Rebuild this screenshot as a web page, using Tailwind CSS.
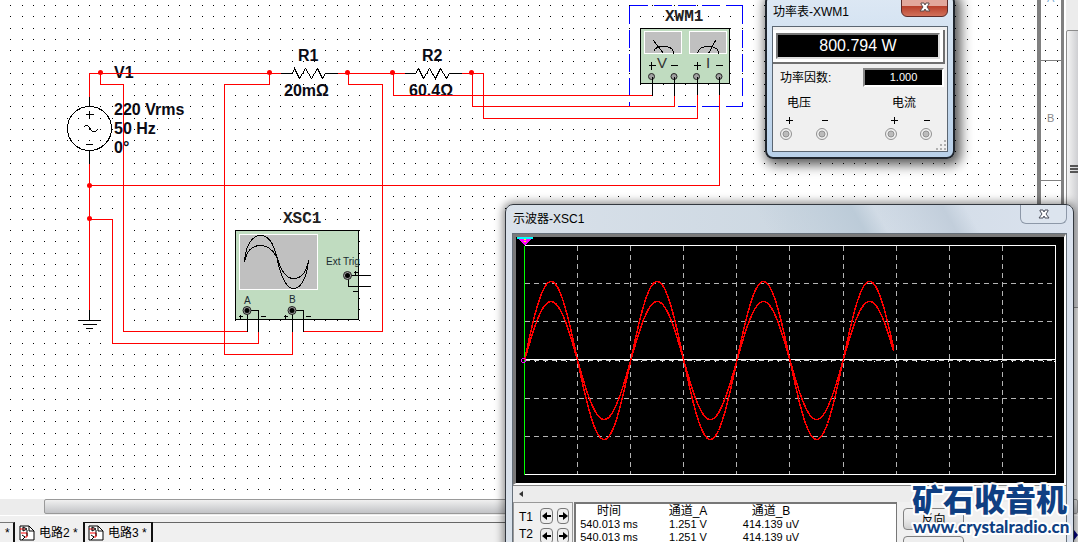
<!DOCTYPE html>
<html lang="zh-CN">
<head>
<meta charset="utf-8">
<meta name="viewport" content="width=device-width, initial-scale=1">
<title>电路2</title>
<script src="https://cdn.jsdelivr.net/npm/@tailwindcss/browser@4"></script>
</head>
<body class="relative flex h-screen flex-col overflow-hidden bg-[#f0f0f0] font-['Liberation_Sans','Noto_Sans_CJK_SC',sans-serif] text-xs text-black">

<!-- Editor: schematic sheet and vertical scrollbar -->
<div class="flex min-h-0 flex-1">
  <main class="relative min-w-0 flex-1 overflow-hidden bg-white">
    <svg class="absolute inset-0 h-full w-full" role="img" aria-label="电路图">
      <defs>
        <pattern id="dots" width="45" height="45" patternUnits="userSpaceOnUse">
          <path shape-rendering="crispEdges" d="M10 5h1v1h-1zM22 5h1v1h-1zM33 5h1v1h-1zM44 5h1v1h-1zM10 16h1v1h-1zM22 16h1v1h-1zM33 16h1v1h-1zM44 16h1v1h-1zM10 28h1v1h-1zM22 28h1v1h-1zM33 28h1v1h-1zM44 28h1v1h-1zM10 39h1v1h-1zM22 39h1v1h-1zM33 39h1v1h-1zM44 39h1v1h-1z"/>
        </pattern>
      </defs>
      <rect width="100%" height="100%" fill="url(#dots)"/>
      <!-- sheet border -->
      <g shape-rendering="crispEdges" fill="#808080">
        <rect x="1037" width="4" height="100%"/><rect x="1061" width="3" height="100%"/>
        <rect x="1041" y="60" width="20" height="1"/><rect x="1041" y="180" width="20" height="1"/>
      </g>
      <g font-size="11" fill="#888"><text x="1047" y="2" fill="#7fb0d8">A</text><text x="1047" y="122">B</text></g>

      <!-- labels -->
      <g font-size="16" font-weight="700" fill="#0a0a14">
        <text x="114" y="78">V1</text>
        <text x="114" y="115">220 Vrms</text><text x="114" y="134">50 Hz</text><text x="114" y="153">0°</text>
        <text x="298" y="61">R1</text><text x="284" y="96">20mΩ</text>
        <text x="422" y="61">R2</text><text x="409" y="96">60.4Ω</text>
      </g>
      <g font-family="Liberation Mono, monospace" font-size="16" font-weight="700" fill="#222">
        <text x="283" y="223">XSC1</text><text x="665" y="21">XWM1</text>
      </g>

      <!-- instrument bodies -->
      <g transform="translate(.5 .5)" shape-rendering="crispEdges">
        <rect x="235" y="230" width="123" height="89" fill="#c0dcc0" stroke="#000"/>
        <rect x="239" y="234" width="78" height="55" fill="#c0c0c0" stroke="#fff"/>
        <rect x="640" y="28" width="89" height="55" fill="#c0dcc0" stroke="#000"/>
        <rect x="644" y="31" width="37" height="22" fill="#c0c0c0" stroke="#fff"/>
        <rect x="689" y="31" width="37" height="22" fill="#c0c0c0" stroke="#fff"/>
        <path d="M629 5H742M629 106H742" fill="none" stroke="#00f" stroke-dasharray="18 6"/>
        <path d="M629 5V106M742 5V106" fill="none" stroke="#00f" stroke-dasharray="18 6"/>
      </g>

      <!-- wires -->
      <g transform="translate(.5 .5)" shape-rendering="crispEdges" fill="none" stroke="#f00">
        <path d="M89 96V73H280M337 73H404M461 73H483V118H697V94"/>
        <path d="M100 73V84H123V331H247M269 73V84H224V354H292V331M348 73V84H382V331H303"/>
        <path d="M393 73V95H652M472 73V106H674V95M719 94V185H89"/>
        <path d="M89 163V309M89 219H112V343H258V331"/>
        <g stroke="#000">
          <path d="M89 96V106M89 151V163M89 309V320M78 320H100M82 324H96M85 328H92"/>
          <path d="M280 73H292M325 73H337M404 73H415M449 73H461"/>
          <path d="M247 311V331M249 310H258V330M292 311V331M294 310H303V330M350 275H370M348 277V286H370"/>
          <path d="M652 77V95M674 77V95M697 77V94M719 77V94"/>
          <path d="M85 114H93M89 110V118M85 144H92"/>
          <path d="M238 316H242M240 314V318M260 316H265M283 316H287M285 314V318M305 316H310M353 272H357M355 270V274M352 291H357"/>
          <path d="M648 65H655M651 61V69M670 65H677M693 65H700M697 61V69M715 65H722"/>
          <circle cx="89" cy="128" r="22"/>
          <path d="M83 127L85 125H87L92 131H95L97 129"/>
          <path d="M292 73L294 68 299 78 305 68 311 78 317 68 322 78 325 73M415 73L418 68 423 78 429 68 435 78 440 68 446 78 449 73"/>
          <path d="M244 262C245 244 252 235 260 235C268 235 274 244 277 260C281 278 286 288 293 288C300 288 306 279 308 260"/>
          <path d="M244 262C246 250 252 245 260 245C268 245 273 250 277 258C281 272 287 278 293 278C301 278 306 272 308 260"/>
          <path d="M653 40L663 53M653 51C656 44 670 44 673 51V53M715 40L708 53M697 53C698 44 715 44 718 51V53"/>
        </g>
      </g>
      <g fill="#f00">
        <circle cx="100.5" cy="72.5" r="2.5"/><circle cx="269.5" cy="72.5" r="2.5"/><circle cx="347.5" cy="72.5" r="2.5"/><circle cx="392.5" cy="72.5" r="2.5"/><circle cx="471.5" cy="72.5" r="2.5"/><circle cx="89.5" cy="185.5" r="2.5"/><circle cx="89.5" cy="218.5" r="2.5"/>
      </g>
      <!-- terminals -->
      <g fill="#a0a0a0" stroke="#222">
        <circle cx="651.5" cy="76.5" r="3"/><circle cx="674" cy="76.5" r="3"/><circle cx="696.5" cy="76.5" r="3"/><circle cx="719" cy="76.5" r="3"/>
        <circle cx="247" cy="310.5" r="4"/><circle cx="292" cy="310.5" r="4"/><circle cx="347.5" cy="275.5" r="4"/>
      </g>
      <g><circle cx="247" cy="310.5" r="2.5"/><circle cx="292" cy="310.5" r="2.5"/><circle cx="347.5" cy="275.5" r="2.5"/></g>
      <path d="M652.5 77v5M674.5 77v5M697.5 77v5M719.5 77v5" stroke="#000"/>
      <g font-size="10" fill="#1b2a30"><text x="326" y="265">Ext Trig</text><text x="244" y="304">A</text><text x="289" y="303">B</text></g>
      <g font-size="15" fill="#333"><text x="657" y="68">V</text><text x="706" y="68">I</text></g>
    </svg>
  </main>
  <div class="w-[13px] border-l border-white bg-[#ececec] pt-[30px]">
    <div class="-mr-1 flex h-[278px] items-center rounded-xs border border-[#8c8c8c] bg-linear-to-r from-[#f4f4f4] to-[#c4c5c9] pl-[3px]">
      <svg width="8" height="9" shape-rendering="crispEdges"><path d="M0 1h8M0 4h8M0 7h8" stroke="#555" stroke-width="2"/></svg>
    </div>
  </div>
</div>

<!-- Horizontal scrollbar -->
<div class="h-[17px] border-b border-white bg-[#ececec] pl-[44px]">
  <div class="h-[15px] rounded-xs border border-[#999] bg-linear-to-b from-[#f0f0f0] to-[#c2c3c6]"></div>
</div>

<!-- Sheet tabs -->
<nav class="flex h-[26px] pt-[6px] text-xs" aria-label="图纸">
  <a href="#s1" class="w-[15px] border-t border-r-2 border-[#111] border-t-[#777] pl-[5px] leading-[20px]">*</a>
  <a href="#s2" class="flex w-[68px] items-center gap-1 pt-[2px] pl-[4px] whitespace-nowrap">
    <svg width="16" height="16" fill="none" stroke="#000" class="shrink-0"><path d="M1 1h9l5 5v9H1z" fill="#fff"/><path d="M10 1v5h5"/><path d="M1 4h5M2 8h6v4H5" stroke="#f00"/><path d="M4 2v4l4-2zM3 10l3 2-3 3M8 5v6"/></svg>
    <span>电路2 *</span></a>
  <a href="#s3" class="flex w-[70px] items-center gap-1 border-x-2 border-t border-[#111] pl-[3px] whitespace-nowrap">
    <svg width="16" height="16" fill="none" stroke="#000" class="shrink-0"><path d="M1 1h9l5 5v9H1z" fill="#fff"/><path d="M10 1v5h5"/><path d="M1 4h5M2 8h6v4H5" stroke="#f00"/><path d="M4 2v4l4-2zM3 10l3 2-3 3M8 5v6"/></svg>
    <span>电路3 *</span></a>
  <span class="flex-1 border-t border-[#666]"></span>
  <svg class="mt-2 shrink-0" width="4" height="10"><path d="M0 0v10l4-5z" fill="#000080"/></svg>
</nav>

<!-- Wattmeter window -->
<section class="absolute -top-[6px] left-[765px] w-[190px] rounded-lg border-2 border-[#20262e] bg-linear-to-b from-[#dde8f4] via-[#c9dcef] to-[#b9d1ea] px-[5px] pb-[5px] shadow-[3px_3px_12px_3px_rgba(0,0,0,0.65)]" aria-label="功率表-XWM1">
  <header class="flex h-[30px] items-start justify-between pl-px">
    <h2 class="pt-[7px] leading-[18px]">功率表-XWM1</h2>
    <button aria-label="关闭" class="flex h-[21px] w-[47px] items-center justify-center rounded-b-md border border-[#5b2a28] bg-linear-to-b from-[#e2a79c] from-45% via-[#b8402c] via-50% to-[#d0705a] pt-[2px]">
      <svg width="12" height="11"><path d="M2 1h3l1 2 1-2h3v1L8 5l3 4H7L6 7 5 9H1l3-4-2-3z" fill="#fff" stroke="#5a4a4a"/></svg>
    </button>
  </header>
  <div class="border border-[#5b6672] bg-[#f0f0f0] pt-[3px] pb-[6px]">
    <div class="mr-[2px] border-r-2 border-b-2 border-[#707070] bg-white p-[3px]">
      <output class="block h-[26px] border-2 border-[#777] border-r-[#ddd] border-b-[#ddd] bg-black text-center text-base leading-[22px] text-white">800.794 W</output>
    </div>
    <div class="mt-[4px] flex items-center justify-between pr-[3px] pl-[7px]">
      <span>功率因数:</span>
      <output class="h-[19px] w-[81px] border-2 border-[#888] border-r-white border-b-white bg-black text-center text-[11px] leading-[15px] text-white">1.000</output>
    </div>
    <div class="mt-[8px] flex justify-between pr-[14px] pl-[7px]">
      <div><p class="pl-[7px] leading-[16px]">电压</p>
        <svg width="50" height="34" fill="none" stroke="#000"><path d="M6 9.500h7M9.500 6v7M42 9.500h6" shape-rendering="crispEdges"/><g stroke="#909090"><circle cx="6" cy="23" r="5.500"/><circle cx="42" cy="23" r="5.500"/><circle cx="6" cy="23" r="3" fill="#bbb"/><circle cx="42" cy="23" r="3" fill="#bbb"/></g></svg></div>
      <div><p class="pl-[7px] leading-[16px]">电流</p>
        <svg width="48" height="34" fill="none" stroke="#000"><path d="M6 9.500h7M9.500 6v7M39 9.500h6" shape-rendering="crispEdges"/><g stroke="#909090"><circle cx="6" cy="23" r="5.500"/><circle cx="41" cy="23" r="5.500"/><circle cx="6" cy="23" r="3" fill="#bbb"/><circle cx="41" cy="23" r="3" fill="#bbb"/></g></svg></div>
    </div>
  </div>
  <svg class="absolute right-[7px] bottom-[7px]" width="10" height="10" fill="#b0b0b0"><path d="M8 0h2v2H8zM4 4h2v2H4zM8 4h2v2H8zM0 8h2v2H0zM4 8h2v2H4zM8 8h2v2H8z"/></svg>
</section>

<!-- Oscilloscope window -->
<section class="absolute top-[204px] left-[505px] flex h-[350px] w-[569px] flex-col rounded-t-lg border border-[#33383f] bg-linear-to-r from-[#d9e1ea] via-[#cdd8e2] to-[#dae2ee] px-[6px] shadow-[0_0_8px_2px_rgba(0,0,0,0.45)]" aria-label="示波器-XSC1">
  <header class="flex h-[28px] shrink-0 items-start justify-between bg-[linear-gradient(60deg,transparent_45%,#bccbd8_62%,transparent_66%,#c2cedb_78%,transparent_82%)] pl-px">
    <h2 class="pt-[5px] leading-[18px]">示波器-XSC1</h2>
    <button aria-label="关闭" class="flex h-[19px] w-[47px] items-center justify-center rounded-b-md border border-t-0 border-[#8d98a8] bg-[#dce4ee]">
      <svg width="12" height="11"><path d="M2 1h3l1 2 1-2h3v1L8 5l3 4H7L6 7 5 9H1l3-4-2-3z" fill="#fff" stroke="#4a4f5c"/></svg>
    </button>
  </header>
  <div class="min-h-0 flex-1 border border-[#66707a] bg-[#f0f0f0]">
    <div class="border-t-3 border-r-2 border-b-2 border-l-3 border-[#7a7a7a] border-r-white border-b-white bg-black">
      <svg id="plot" class="block w-full" height="246" viewBox="516 237 548 246" fill="none" shape-rendering="crispEdges" role="img" aria-label="波形">
        <g transform="translate(.5 .5)">
          <path d="M577 245V474M630 245V474M683 245V474M736 245V474M789 245V474M843 245V474M896 245V474M949 245V474M1002 245V474" stroke="#b4b4b4" stroke-dasharray="5 4"/>
          <path d="M524 283H1055M524 321H1055M524 398H1055M524 436H1055" stroke="#b4b4b4" stroke-dasharray="5 4"/>
          <path d="M524 245H1055V474H524M524 359H1055" stroke="#fff"/>
          <path d="M524 360H1055" stroke="#ccc" stroke-dasharray="5 4"/>
          <path d="M534 361H1055" stroke="#fff" stroke-dasharray="1 9.600"/>
          <path d="M524 245V474" stroke="#0f0"/>
          <path id="waveA" stroke="#f00" stroke-width="1.500"/><path id="waveB" stroke="#f00" stroke-width="1.500"/>
          <path d="M516 237h16l-8 8z" fill="#f0f"/><path d="M516 237h16" stroke="#0ff" stroke-width="2"/><path d="M523 239h2M523 241h2" stroke="#ff0"/>
          <circle cx="523" cy="360" r="2" stroke="#f0f"/>
        </g>
      </svg>
    </div>
    <div class="flex h-[17px] items-center border-t border-[#888] bg-[#ececec] pl-[6px]">
      <svg width="4" height="6"><path d="M4 0v6L0 3z" fill="#333"/></svg>
    </div>
    <div class="flex items-start gap-px">
      <div class="grid w-[60px] grid-cols-[18px_13px_13px] gap-x-[3px] gap-y-[2px] border border-[#999] px-[5px] pt-[5px] pb-4">
        <span class="leading-[18px]">T1</span>
        <button aria-label="T1 左移" class="flex h-4 items-center justify-center rounded-sm border border-[#777] bg-[#eee]"><svg width="9" height="8"><path d="M0 4l5-4v3h4v2H5v3z"/></svg></button>
        <button aria-label="T1 右移" class="ml-px flex h-4 items-center justify-center rounded-sm border border-[#777] bg-[#eee]"><svg width="9" height="8"><path d="M9 4L4 0v3H0v2h4v3z"/></svg></button>
        <span class="leading-[12px]">T2</span>
        <button aria-label="T2 左移" class="flex h-4 items-center justify-center rounded-sm border border-[#777] bg-[#eee]"><svg width="9" height="8"><path d="M0 4l5-4v3h4v2H5v3z"/></svg></button>
        <button aria-label="T2 右移" class="ml-px flex h-4 items-center justify-center rounded-sm border border-[#777] bg-[#eee]"><svg width="9" height="8"><path d="M9 4L4 0v3H0v2h4v3z"/></svg></button>
      </div>
      <div class="h-14 w-[323px] border border-t-2 border-l-2 border-[#777] bg-white pt-px">
        <table class="w-[232px] table-fixed text-center text-[11px] leading-[13px]">
          <thead><tr class="text-xs leading-[13px]"><th class="w-[66px] font-normal">时间</th><th class="w-[92px] font-normal">通道_A</th><th class="font-normal">通道_B</th></tr></thead>
          <tbody><tr><td>540.013 ms</td><td>1.251 V</td><td>414.139 uV</td></tr><tr><td>540.013 ms</td><td>1.251 V</td><td>414.139 uV</td></tr></tbody>
        </table>
      </div>
      <div class="flex flex-col gap-[6px] pt-[6px] pl-[5px]">
        <button class="h-[22px] w-[61px] rounded-sm border border-[#808080] bg-linear-to-b from-[#f2f2f2] via-[#ebebeb] to-[#cfcfcf] pt-px leading-[20px]">反向</button>
        <button aria-label="保存" class="h-[21px] w-[61px] rounded-sm border border-[#808080] bg-[#eee]"></button>
      </div>
    </div>
  </div>
</section>

<!-- Site mark -->
<svg class="absolute right-0 bottom-0" width="170" height="64" fill="#0f3f82" stroke="#fff" stroke-width="4" stroke-linejoin="round" paint-order="stroke">
  <text x="4" y="33" font-family="Noto Sans CJK SC, sans-serif" font-size="31" font-weight="900">矿石收音机</text>
  <text x="5" y="55" font-family="Lato, sans-serif" font-size="17" font-weight="900">www.crystalradio.cn</text>
</svg>

<script>
  // Sine traces: zero at (524, 360), one cycle every 106.2 units
  function trace(id, amp) {
    let d = '';
    for (let x = 524; x <= 893; x++) {
      const y = 360 - amp * Math.sin((x - 524) / 106.2 * 2 * Math.PI);
      d += (d ? 'L' : 'M') + x + ' ' + y.toFixed(1);
    }
    document.getElementById(id).setAttribute('d', d);
  }
  trace('waveA', 79);
  trace('waveB', 59);
</script>
</body>
</html>
